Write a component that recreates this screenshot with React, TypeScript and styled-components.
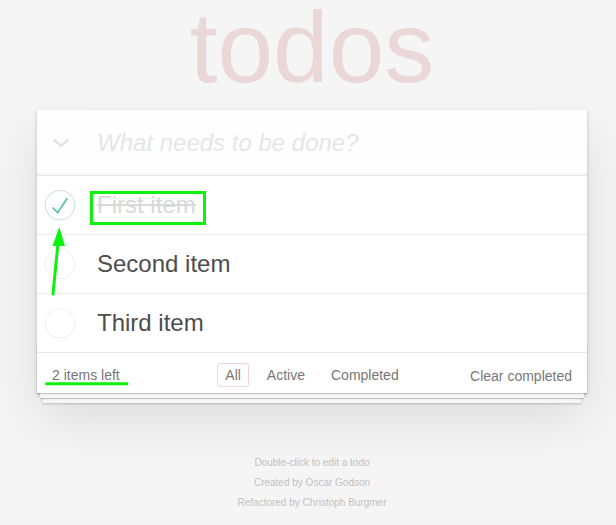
import * as React from "react";
import styled, { createGlobalStyle } from "styled-components";

const GlobalStyle = createGlobalStyle`
  html, body {
    margin: 0;
    padding: 0;
  }

  body {
    background: #f5f5f5;
    color: #4d4d4d;
    font: 14px "Liberation Sans", Arial, Helvetica, sans-serif;
    line-height: 1.4em;
    font-weight: 300;
    -webkit-font-smoothing: antialiased;
  }

  #root {
    position: relative;
  }
`;

interface Todo {
  id: number;
  title: string;
  completed: boolean;
}

const TODOS: Todo[] = [
  { id: 1, title: "First item", completed: true },
  { id: 2, title: "Second item", completed: false },
  { id: 3, title: "Third item", completed: false },
];

const FILTERS = ["All", "Active", "Completed"];

export default function App() {
  const left = TODOS.filter(todo => !todo.completed).length;

  return (
    <>
      <GlobalStyle />
      <Screen>
        <Page>
          <Title>todos</Title>

          <TodoApp>
            <Header>
              <ToggleAll>
                <svg width="18" height="10" viewBox="0 0 18 10">
                  <polyline points="1.5,1.5 9,8 16.5,1.5" fill="none" stroke="#e3e3e3" strokeWidth="2.4" />
                </svg>
              </ToggleAll>
              <NewTodo placeholder="What needs to be done?" />
            </Header>

            <Main>
              {TODOS.map(todo => (
                <Item key={todo.id}>
                  <Toggle>
                    <svg width="40" height="40" viewBox="-10 -18 100 135">
                      <circle cx="50" cy="50" r="50" fill="none" stroke={todo.completed ? "#bddad5" : "#ededed"} strokeWidth="3" />
                      {todo.completed && <path fill="#5dc2af" d="M72 25L42 71 27 56l-4 4 20 20 34-52z" />}
                    </svg>
                  </Toggle>
                  <Label $completed={todo.completed}>{todo.title}</Label>
                </Item>
              ))}
            </Main>

            <Footer>
              <Count>{left} items left</Count>
              <Filters>
                {FILTERS.map(name => (
                  <FilterLink key={name} $selected={name === "All"}>{name}</FilterLink>
                ))}
              </Filters>
              <ClearCompleted>Clear completed</ClearCompleted>
            </Footer>
          </TodoApp>

          <Info>
            <p>Double-click to edit a todo</p>
            <p>Created by Oscar Godson</p>
            <p>Refactored by Christoph Burgmer</p>
          </Info>
        </Page>
      </Screen>

      {/* green review marks drawn on top of the screenshot */}
      <Marks width="616" height="525" viewBox="0 0 616 525">
        <rect x="91.5" y="192.5" width="113" height="31" fill="none" stroke="#0cf20c" strokeWidth="3" />
        <line x1="53" y1="294" x2="58" y2="243" stroke="#0cf20c" strokeWidth="3" strokeLinecap="round" />
        <polygon points="59.3,227 52.5,246 65,246" fill="#0cf20c" />
        <line x1="46.5" y1="383.8" x2="127" y2="383.8" stroke="#0cf20c" strokeWidth="3" strokeLinecap="round" />
      </Marks>
    </>
  );
}

const Screen = styled.div`
  padding-left: 8px;
`;

const Page = styled.div`
  width: 550px;
  margin: 0 auto;
`;

const Title = styled.h1`
  height: 94px;
  margin: 0 0 16px;
  color: rgba(175, 47, 47, 0.15);
  font-size: 100px;
  font-weight: 100;
  line-height: 94px;
  text-align: center;
  text-rendering: optimizeLegibility;
`;

const TodoApp = styled.section`
  position: relative;
  background: #fff;
  box-shadow: 0 2px 4px 0 rgba(0, 0, 0, 0.2), 0 25px 50px 0 rgba(0, 0, 0, 0.1);
`;

const Header = styled.header`
  display: flex;
  align-items: center;
  background: rgba(0, 0, 0, 0.003);
  box-shadow: inset 0 -2px 1px rgba(0, 0, 0, 0.03);
`;

const ToggleAll = styled.div`
  display: flex;
  align-items: center;
  width: 60px;
  padding-left: 15px;
  box-sizing: border-box;
  flex: none;
`;

const NewTodo = styled.input`
  flex: 1;
  min-width: 0;
  padding: 16px 16px 16px 0;
  border: none;
  outline: none;
  background: transparent;
  color: #4d4d4d;
  font-family: inherit;
  font-size: 24px;
  font-weight: inherit;
  line-height: 33px;

  &::placeholder {
    color: #e6e6e6;
    font-style: italic;
  }
`;

const Main = styled.ul`
  margin: 0;
  padding: 0;
  list-style: none;
  border-top: 1px solid #e6e6e6;
`;

const Item = styled.li`
  display: flex;
  align-items: center;
  font-size: 24px;
  border-bottom: 1px solid #ededed;

  &:last-child {
    border-bottom: none;
  }
`;

const Toggle = styled.div`
  display: flex;
  width: 45px;
  flex: none;
`;

const Label = styled.label<{ $completed: boolean }>`
  display: block;
  flex: 1;
  padding: 15px 60px 15px 15px;
  color: ${p => (p.$completed ? "#d9d9d9" : "#4d4d4d")};
  text-decoration: ${p => (p.$completed ? "line-through" : "none")};
  line-height: 28px;
  word-break: break-all;
`;

const Footer = styled.footer`
  display: grid;
  grid-template-columns: 1fr auto 1fr;
  align-items: center;
  height: 20px;
  padding: 10px 15px;
  border-top: 1px solid #e6e6e6;
  color: #777;

  &::before {
    content: "";
    position: absolute;
    right: 0;
    bottom: 0;
    left: 0;
    height: 50px;
    overflow: hidden;
    pointer-events: none;
    box-shadow: 0 1px 1px rgba(0, 0, 0, 0.2),
      0 8px 0 -3px #f6f6f6,
      0 9px 1px -3px rgba(0, 0, 0, 0.2),
      0 16px 0 -6px #f6f6f6,
      0 17px 2px -6px rgba(0, 0, 0, 0.2);
  }
`;

const Count = styled.span`
  justify-self: start;
  line-height: 20px;
`;

const Filters = styled.div`
  display: flex;
  gap: 10px;
`;

const FilterLink = styled.a<{ $selected: boolean }>`
  padding: 2px 7px;
  border: 1px solid ${p => (p.$selected ? "rgba(175, 47, 47, 0.2)" : "transparent")};
  border-radius: 3px;
  color: inherit;
  line-height: 18px;
  text-decoration: none;
`;

const ClearCompleted = styled.span`
  justify-self: end;
  margin-top: 2px;
  line-height: 20px;
`;

const Info = styled.footer`
  margin: 65px auto 0;
  color: #bfbfbf;
  font-size: 10px;
  text-align: center;
  text-shadow: 0 1px 0 rgba(255, 255, 255, 0.5);

  p {
    margin: 10px 0;
    line-height: 1;
  }
`;

const Marks = styled.svg`
  position: absolute;
  top: 0;
  left: 0;
  pointer-events: none;
`;
